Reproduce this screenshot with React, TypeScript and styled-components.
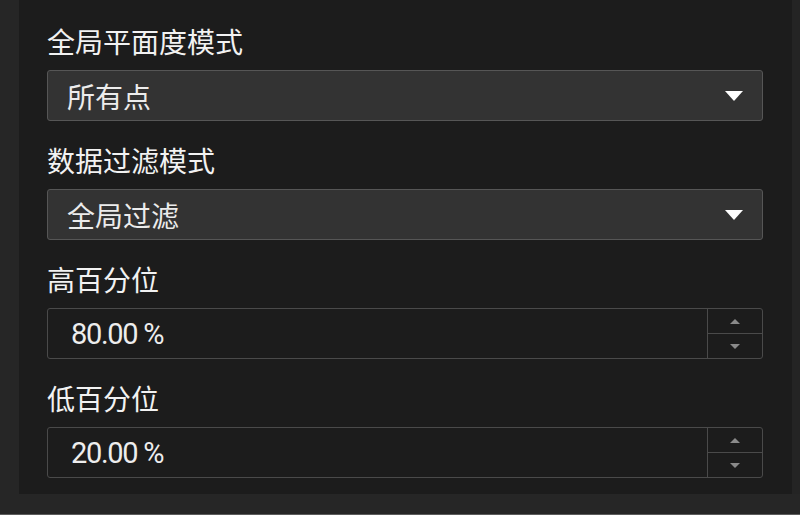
import React from "react";
import styled, { createGlobalStyle } from "styled-components";

const GlobalStyle = createGlobalStyle`
  html, body {
    margin: 0;
    padding: 0;
    background: #262626;
  }
  * {
    box-sizing: border-box;
  }
`;

const Page = styled.div`
  height: 515px;
  width: 800px;
  display: flex;
  align-items: flex-start;
  padding-left: 19px;
  background: #262626;
  border-bottom: 1px solid #5c5c5c;
  font-family: "Noto Sans CJK SC", "Noto Sans", sans-serif;
`;

const Panel = styled.div`
  width: 773px;
  height: 494px;
  background: #1c1c1c;
  padding: 24px 29px 0 28px;
  display: flex;
  flex-direction: column;
  gap: 22px;
`;

const Side = styled.div`
  width: 8px;
  height: 494px;
  background: #242424;
`;

const Field = styled.div`
  display: flex;
  flex-direction: column;
  gap: 12px;
`;

const Label = styled.div`
  height: 34px;
  line-height: 34px;
  font-size: 28px;
  font-weight: 400;
  color: #f2f2f2;
`;

const Select = styled.div`
  height: 51px;
  display: flex;
  align-items: center;
  justify-content: space-between;
  padding: 0 19px 0 19px;
  background: #333333;
  border: 1.5px solid #565656;
  border-radius: 3px;
  font-size: 28px;
  color: #ececec;
`;

const Caret = styled.span`
  width: 0;
  height: 0;
  border-left: 9px solid transparent;
  border-right: 9px solid transparent;
  border-top: 10px solid #ffffff;
`;

const Spin = styled.div`
  height: 51px;
  display: flex;
  background: #1c1c1c;
  border: 1.5px solid #4a4a4a;
  border-radius: 3px;
`;

const Value = styled.div`
  flex: 1;
  display: flex;
  align-items: center;
  padding-left: 23px;
  font-family: "Roboto", "Noto Sans CJK SC", sans-serif;
  font-size: 29px;
  letter-spacing: -1.3px;
  color: #ededed;
`;

const Buttons = styled.div`
  width: 55px;
  display: flex;
  flex-direction: column;
  border-left: 1.5px solid #4a4a4a;
`;

const Step = styled.div<{ $down?: boolean }>`
  flex: 1;
  display: flex;
  align-items: center;
  justify-content: center;
  border-top: ${(p) => (p.$down ? "1.5px solid #4a4a4a" : "none")};

  &::after {
    content: "";
    width: 0;
    height: 0;
    border-left: 5.5px solid transparent;
    border-right: 5.5px solid transparent;
    ${(p) =>
      p.$down
        ? "border-top: 5px solid #8a8a8a;"
        : "border-bottom: 5px solid #8a8a8a;"}
  }
`;

const fields = [
  { label: "全局平面度模式", kind: "select", value: "所有点" },
  { label: "数据过滤模式", kind: "select", value: "全局过滤" },
  { label: "高百分位", kind: "spin", value: "80.00 %" },
  { label: "低百分位", kind: "spin", value: "20.00 %" },
];

const App = () => {
  return (
    <>
      <GlobalStyle />
      <Page>
        <Panel>
          {fields.map((f) => (
            <Field key={f.label}>
              <Label>{f.label}</Label>
              {f.kind === "select" ? (
                <Select>
                  <span>{f.value}</span>
                  <Caret />
                </Select>
              ) : (
                <Spin>
                  <Value>{f.value}</Value>
                  <Buttons>
                    <Step />
                    <Step $down />
                  </Buttons>
                </Spin>
              )}
            </Field>
          ))}
        </Panel>
        <Side />
      </Page>
    </>
  );
};

export default App;
